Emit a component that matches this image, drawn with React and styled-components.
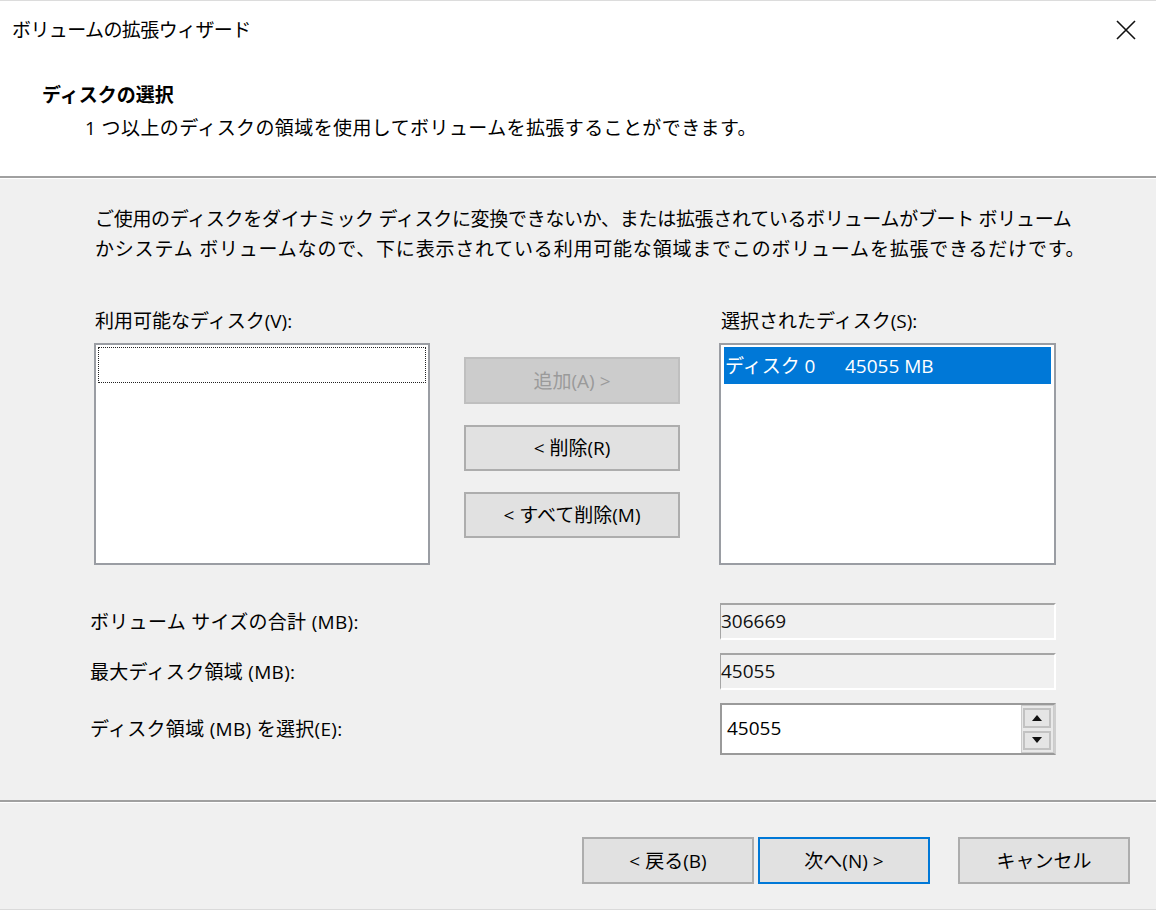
import React from "react";
import styled, { createGlobalStyle } from "styled-components";

const GlobalStyle = createGlobalStyle`
  html, body { margin: 0; padding: 0; background: #f0f0f0; }
  body {
    font-family: "Open Sans", "Noto Sans CJK JP", sans-serif;
    font-size: 19px;
    color: #000;
  }
  * { box-sizing: border-box; }
`;

const Window = styled.div`
  width: 1156px;
  height: 910px;
  background: #f0f0f0;
  display: flex;
  flex-direction: column;
  border-top: 1px solid #dcdcdc;
  border-bottom: 1px solid #dadada;
  overflow: hidden;
`;

const Header = styled.header`
  height: 177px;
  background: #fff;
  border-bottom: 2px solid #a0a0a0;
  display: flex;
  flex-direction: column;
`;

const TitleRow = styled.div`
  display: flex;
  justify-content: space-between;
  align-items: center;
  padding: 17px 20px 0 12px;
  height: 41px;
`;

const Title = styled.div`
  line-height: 24px;
  letter-spacing: -0.6px;
`;

const CloseButton = styled.div`
  width: 20px;
  height: 20px;
  display: flex;
`;

const HeaderText = styled.div`
  padding-left: 42px;
  margin-top: 40px;
`;

const Heading = styled.div`
  font-weight: 700;
  line-height: 26px;
`;

const SubHeading = styled.div`
  margin-top: 7px;
  padding-left: 43px;
  line-height: 26px;
  letter-spacing: 0.4px;
`;

const Body = styled.main`
  flex: 1;
  border-top: 1px solid #fff;
  padding: 25px 0 0 94px;
`;

const Paragraph = styled.div`
  padding-left: 1px;
`;

const ParagraphLine = styled.div`
  line-height: 30px;
  white-space: nowrap;
  letter-spacing: ${(p) => p.$spacing || 0}px;
`;

const ListsGrid = styled.div`
  display: grid;
  grid-template-columns: 336px 289px 337px;
  grid-template-rows: 24px 222px;
  row-gap: 10px;
  margin-top: 45px;
`;

const ListLabel = styled.div`
  line-height: 24px;
  padding-left: ${(p) => p.$indent || 1}px;
`;

const ListBox = styled.div`
  background: #fff;
  border: 2px solid #9a9da3;
  padding: 1px 2px;
`;

const FocusItem = styled.div`
  height: 36px;
  margin-top: 1px;
  border: 1px dotted #222;
`;

const SelectedItem = styled.div`
  height: 37px;
  margin: 1px 1px 0 1px;
  background: #0078d7;
  color: #fff;
  display: flex;
  align-items: center;
  line-height: 24px;
`;

const ItemCell = styled.span`
  display: inline-block;
  width: ${(p) => p.$width || "auto"};
  padding-left: 1px;
`;

const ButtonStack = styled.div`
  display: flex;
  flex-direction: column;
  gap: 21px;
  padding: 14px 0 0 34px;
`;

const Button = styled.button`
  font-family: inherit;
  font-size: 19px;
  width: ${(p) => p.$width || 216}px;
  height: ${(p) => p.$height || 46}px;
  background: ${(p) => (p.disabled ? "#cccccc" : "#e1e1e1")};
  color: ${(p) => (p.disabled ? "#9a9a9a" : "#000")};
  border: 2px solid ${(p) => (p.$default ? "#0078d7" : p.disabled ? "#bfbfbf" : "#adadad")};
  padding: 0;
  margin: 0;
  line-height: 24px;
  cursor: default;
`;

const FieldsGrid = styled.div`
  display: grid;
  grid-template-columns: 630px 336px;
  row-gap: 13px;
  align-items: center;
  margin: 38px 0 0 -4px;
`;

const FieldLabel = styled.div`
  line-height: 24px;
  letter-spacing: 0.3px;
`;

const ReadOnlyField = styled.div`
  height: 37px;
  background: #f0f0f0;
  border-top: 2px solid #a5a5a5;
  border-left: 1px solid #a5a5a5;
  border-bottom: 2px solid #fff;
  border-right: 2px solid #fff;
  line-height: 33px;
  color: #111;
`;

const SpinBox = styled.div`
  height: 52px;
  display: flex;
  border: 2px solid #9a9a9a;
  border-right-color: #cfcfcf;
  background: #fff;
`;

const SpinInput = styled.div`
  flex: 1;
  padding-left: 5px;
  line-height: 46px;
`;

const SpinColumn = styled.div`
  width: 33px;
  background: #e9e9e9;
  border: 1px solid #cbcbcb;
  display: flex;
  flex-direction: column;
  gap: 3px;
  padding: 2px 2px 2px 1px;
`;

const SpinButton = styled.div`
  flex: 1;
  background: #e5e5e5;
  border: 2px solid #c2c2c2;
  display: flex;
  align-items: center;
  justify-content: center;
`;

const Footer = styled.footer`
  height: 109px;
  border-top: 2px solid #a0a0a0;
  box-shadow: inset 0 1px 0 #fff;
  display: flex;
  justify-content: flex-end;
  align-items: flex-start;
  padding: 35px 26px 0 0;
`;

const FooterGroup = styled.div`
  display: flex;
  gap: ${(p) => p.$gap}px;
  margin-left: ${(p) => p.$ml || 0}px;
`;

const Arrow = ({ up }) => (
  <svg width="10" height="6" viewBox="0 0 10 6">
    <path d={up ? "M5 0 L10 6 L0 6 Z" : "M0 0 L10 0 L5 6 Z"} fill="#111" />
  </svg>
);

export default function App() {
  return (
    <>
      <GlobalStyle />
      <Window>
        <Header>
          <TitleRow>
            <Title>ボリュームの拡張ウィザード</Title>
            <CloseButton>
              <svg width="20" height="20" viewBox="0 0 20 20">
                <path d="M1 1 L19 19 M19 1 L1 19" stroke="#111" strokeWidth="1.6" fill="none" />
              </svg>
            </CloseButton>
          </TitleRow>
          <HeaderText>
            <Heading>ディスクの選択</Heading>
            <SubHeading>1 つ以上のディスクの領域を使用してボリュームを拡張することができます。</SubHeading>
          </HeaderText>
        </Header>
        <Body>
          <Paragraph>
            <ParagraphLine $spacing={-0.3}>
              ご使用のディスクをダイナミック ディスクに変換できないか、または拡張されているボリュームがブート ボリューム
            </ParagraphLine>
            <ParagraphLine $spacing={0.8}>
              かシステム ボリュームなので、下に表示されている利用可能な領域までこのボリュームを拡張できるだけです。
            </ParagraphLine>
          </Paragraph>
          <ListsGrid>
            <ListLabel>利用可能なディスク(V):</ListLabel>
            <div />
            <ListLabel $indent={2}>選択されたディスク(S):</ListLabel>
            <ListBox>
              <FocusItem />
            </ListBox>
            <ButtonStack>
              <Button disabled $height={47}>追加(A) &gt;</Button>
              <Button>&lt; 削除(R)</Button>
              <Button>&lt; すべて削除(M)</Button>
            </ButtonStack>
            <ListBox>
              <SelectedItem>
                <ItemCell $width="120px">ディスク 0</ItemCell>
                <ItemCell>45055 MB</ItemCell>
              </SelectedItem>
            </ListBox>
          </ListsGrid>
          <FieldsGrid>
            <FieldLabel>ボリューム サイズの合計 (MB):</FieldLabel>
            <ReadOnlyField>306669</ReadOnlyField>
            <FieldLabel>最大ディスク領域 (MB):</FieldLabel>
            <ReadOnlyField>45055</ReadOnlyField>
            <FieldLabel>ディスク領域 (MB) を選択(E):</FieldLabel>
            <SpinBox>
              <SpinInput>45055</SpinInput>
              <SpinColumn>
                <SpinButton>
                  <Arrow up />
                </SpinButton>
                <SpinButton>
                  <Arrow />
                </SpinButton>
              </SpinColumn>
            </SpinBox>
          </FieldsGrid>
        </Body>
        <Footer>
          <FooterGroup $gap={4}>
            <Button $width={172} $height={47}>&lt; 戻る(B)</Button>
            <Button $width={172} $height={47} $default>次へ(N) &gt;</Button>
          </FooterGroup>
          <FooterGroup $gap={0} $ml={28}>
            <Button $width={172} $height={47}>キャンセル</Button>
          </FooterGroup>
        </Footer>
      </Window>
    </>
  );
}
